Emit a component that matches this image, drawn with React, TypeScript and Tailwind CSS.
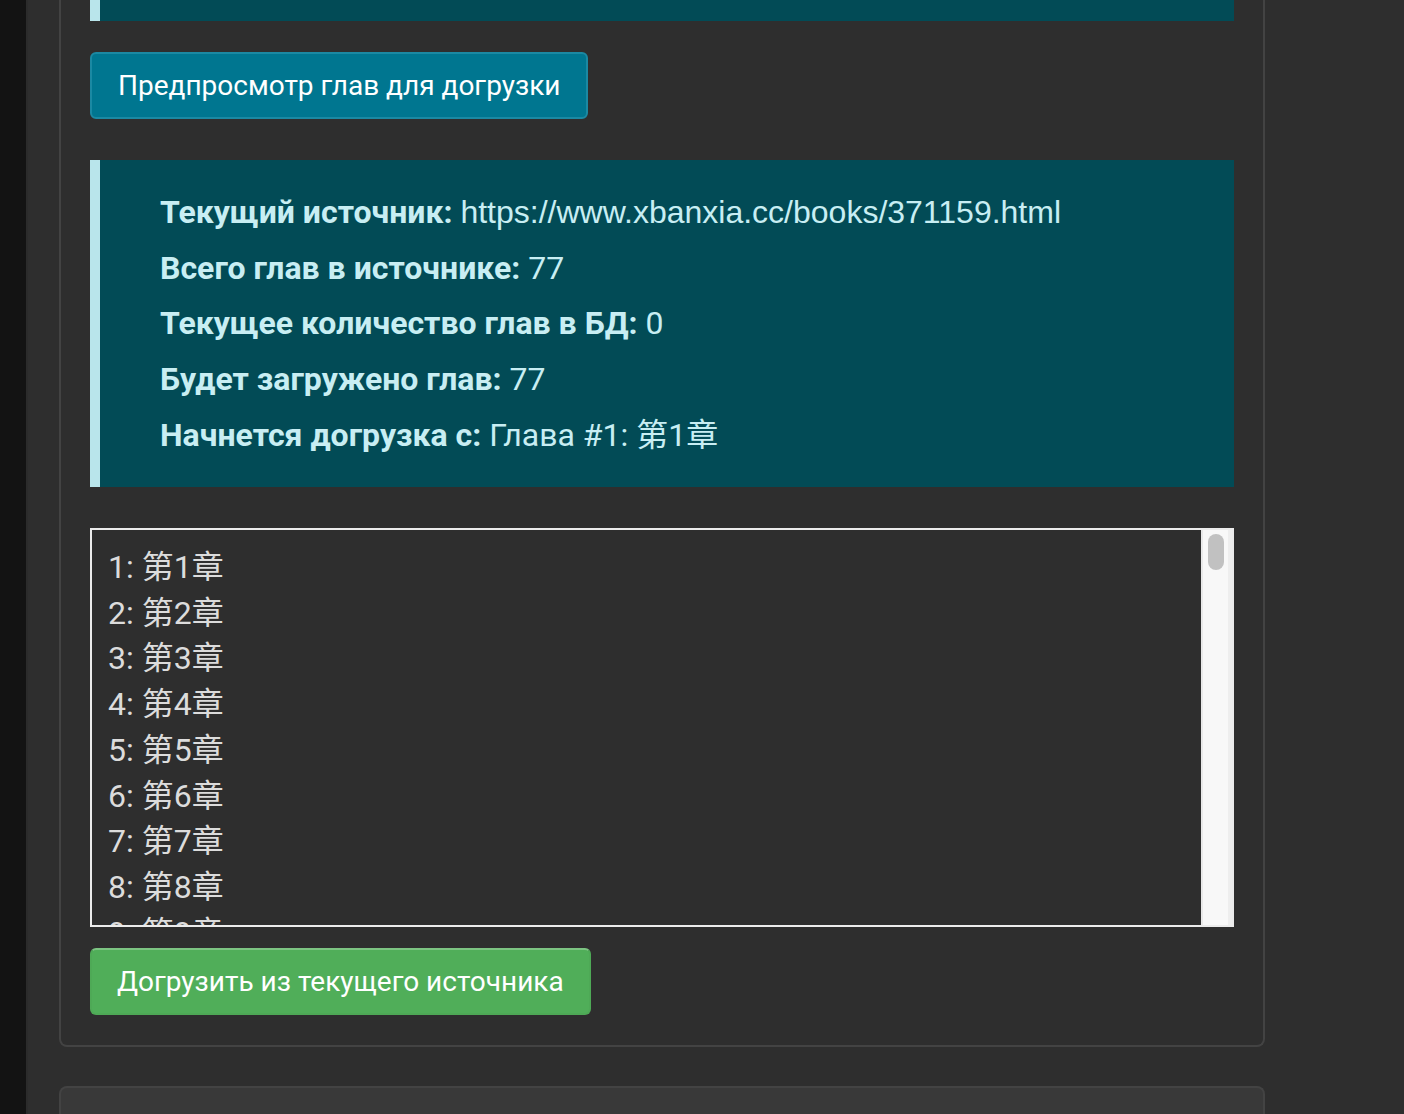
const chapters = Array.from({ length: 77 }, (_, i) => `${i + 1}: 第${i + 1}章`)

const info = [
  { label: "Текущий источник:", value: "https://www.xbanxia.cc/books/371159.html", url: true },
  { label: "Всего глав в источнике:", value: "77" },
  { label: "Текущее количество глав в БД:", value: "0" },
  { label: "Будет загружено глав:", value: "77" },
  { label: "Начнется догрузка с:", value: "Глава #1: 第1章" },
]

function App() {
  return (
    <div
      className="flex min-h-screen w-full bg-[#2e2e2e] overflow-hidden"
      style={{ fontFamily: 'Roboto, "Noto Sans CJK SC", sans-serif' }}
    >
      {/* sidebar edge */}
      <div className="w-[28px] shrink-0 bg-[#131313] border-r-2 border-[#2b2b2b]"></div>

      <div className="flex flex-col pl-[31px] h-[1114px]">
        <div className="w-[1206px] border-2 border-t-0 border-[#434343] rounded-b-[8px] px-[29px] pb-[30px]">
          <div className="h-[21px] bg-[#024b56] border-l-[10px] border-[#b9e5eb]"></div>

          <button className="mt-[31px] h-[67px] px-[26px] bg-[#007690] border-2 border-[#1b89a3] rounded-[6px] text-white text-[28px] leading-[40px]">
            Предпросмотр глав для догрузки
          </button>

          <div className="mt-[41px] h-[327px] bg-[#024b56] border-l-[10px] border-[#b9e5eb] pl-[60px] pt-[30px] text-[#c8eef3]">
            {info.map((row) => (
              <p key={row.label} className="text-[32px] leading-[45.7px] mb-[10px]">
                <span className="font-bold">{row.label}</span>{" "}
                <span className={row.url ? "font-['Liberation_Sans']" : ""}>{row.value}</span>
              </p>
            ))}
          </div>

          <div className="mt-[41px] h-[399px] border-2 border-[#ececec] flex">
            <div className="flex-1 overflow-hidden pl-[16px] pt-[15px] text-[#dcdcdc] text-[32px] leading-[45.7px]">
              {chapters.map((c) => (
                <div key={c}>{c}</div>
              ))}
            </div>
            <div className="w-[31px] shrink-0 bg-[#f8f8f8] border-l-2 border-[#e9e9e9] border-r-4 border-r-[#eeeeee] pt-[4px] flex justify-center">
              <div className="w-[16px] h-[36px] rounded-full bg-[#c1c1c1]"></div>
            </div>
          </div>

          <button className="mt-[21px] h-[67px] px-[25px] bg-[#50ae59] border-2 border-[#4ea956] border-t-[#7cc482] rounded-[6px] text-white text-[28px] leading-[40px]">
            Догрузить из текущего источника
          </button>
        </div>

        <div className="mt-[39px] w-[1206px] flex-1 bg-[#393939] border-2 border-b-0 border-[#434343] rounded-t-[8px]"></div>
      </div>
    </div>
  )
}

export default App
